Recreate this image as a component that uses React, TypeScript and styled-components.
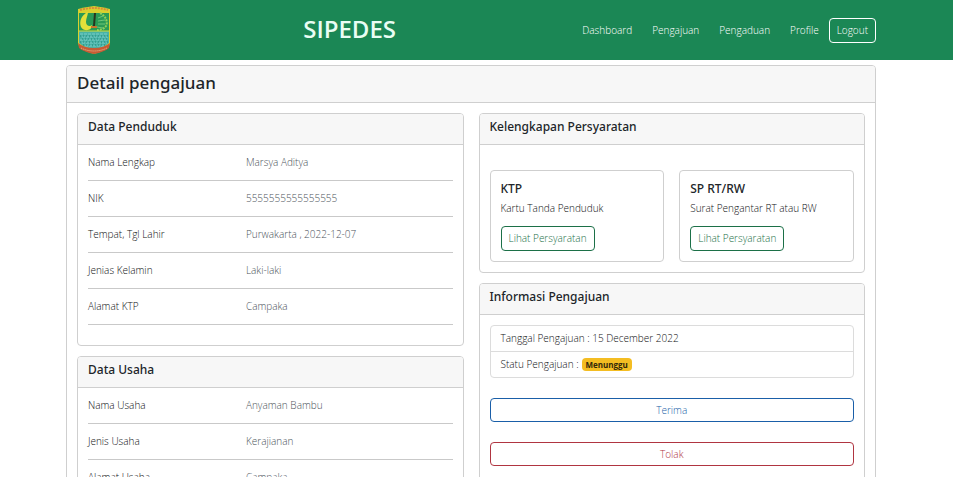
import React from "react";
import styled, { createGlobalStyle, css } from "styled-components";

const GlobalStyle = createGlobalStyle`
  *, *::before, *::after { box-sizing: border-box; }
  body {
    margin: 0;
    background: #fff;
    color: #101214;
    font-family: "Open Sans", "Noto Sans", sans-serif;
    font-size: 10px;
    font-weight: 300;
    line-height: 15px;
  }
  h1, h2, h3, p, ul, dl, dd { margin: 0; padding: 0; }
`;

const Navbar = styled.header`
  display: flex;
  align-items: center;
  justify-content: space-between;
  height: 60px;
  padding: 0 77px;
  background: #1b8755;
  color: #fff;
`;

const BrandLink = styled.a`
  display: block;
  height: 48px;
`;

const AppTitle = styled.h1`
  padding-left: 16px;
  font-size: 24px;
  font-weight: 600;
  line-height: 32px;
  padding-bottom: 2px;
  color: #e9fdf3;
`;

const Nav = styled.nav`
  display: flex;
  align-items: center;
`;

const NavLink = styled.a`
  padding: 5px 10px;
  color: #fff;
  text-decoration: none;
`;

const tones = {
  light: "#ffffff",
  green: "#1c7048",
  blue: "#1a5fa8",
  red: "#b03541",
};

const Button = styled.button<{ $tone: keyof typeof tones; $block?: boolean }>`
  height: 25px;
  padding: 0 7px;
  border: 1px solid ${(p) => tones[p.$tone]};
  border-radius: 4px;
  background: transparent;
  color: ${(p) => tones[p.$tone]};
  font: inherit;
  cursor: pointer;
  ${(p) =>
    p.$block &&
    css`
      display: block;
      width: 100%;
      height: 24px;
      margin-top: 20px;
    `}
`;

const Page = styled.main`
  padding: 5px 77px 16px 66px;
`;

const Card = styled.section`
  border: 1px solid #cfcfcf;
  border-radius: 4px;
  background: #fff;
`;

const PageHeader = styled.div`
  padding: 5px 10px 7px;
  border-bottom: 1px solid #cfcfcf;
  border-radius: 3px 3px 0 0;
  background: #f7f7f7;
`;

const PageTitle = styled.h2`
  color: #212529;
  font-family: "Noto Sans", sans-serif;
  font-size: 17px;
  font-weight: 500;
  line-height: 24px;
`;

const CardHeader = styled.div`
  padding: 5px 10px 9px;
  border-bottom: 1px solid #cfcfcf;
  border-radius: 3px 3px 0 0;
  background: #f7f7f7;
`;

const CardTitle = styled.h3`
  color: #212529;
  font-family: "Noto Sans", sans-serif;
  font-size: 12px;
  font-weight: 500;
  line-height: 16px;
`;

const CardBody = styled.div`
  padding: 10px;
`;

const Columns = styled.div`
  display: grid;
  grid-template-columns: 1fr 1fr;
  align-items: start;
  gap: 15px;
  padding: 10px;
`;

const Column = styled.div`
  display: flex;
  flex-direction: column;
  gap: 10px;
`;

const DetailList = styled.dl`
  padding-bottom: 10px;
`;

const DetailRow = styled.div`
  display: grid;
  grid-template-columns: 13fr 17fr;
  padding-bottom: 10px;
  border-bottom: 1px solid #c9c9c9;

  & + & {
    padding-top: 10px;
  }
`;

const DetailValue = styled.dd`
  color: #4c545b;
`;

const Documents = styled.div`
  display: grid;
  grid-template-columns: 1fr 1fr;
  gap: 15px;
  padding-top: 15px;
`;

const DocumentCard = styled(Card)`
  display: flex;
  flex-direction: column;
  align-items: flex-start;
  padding: 10px;
`;

const DocumentText = styled.p`
  padding: 4px 0 10px;
`;

const InfoList = styled.ul`
  border: 1px solid #dcdcdc;
  border-radius: 4px;
  list-style: none;
`;

const InfoItem = styled.li`
  display: flex;
  align-items: center;
  gap: 3px;
  padding: 5px 10px;

  & + & {
    border-top: 1px solid #dcdcdc;
  }
`;

const Actions = styled.div`
  padding-bottom: 20px;
`;

const Badge = styled.span`
  padding: 0 4px;
  border-radius: 4px;
  background: #f4bd22;
  color: #33280a;
  font-size: 8px;
  font-weight: 700;
  line-height: 13px;
`;

function Crest() {
  return (
    <svg width="34" height="48" viewBox="0 0 34 48" role="img" aria-label="Kabupaten">
      <path d="M1 3Q9 1 17 0Q25 1 33 3V38Q31 44 17 48Q3 44 1 38Z" fill="#d8d02e" />
      <path d="M3 4Q17 0 31 4" fill="none" stroke="#d98a3a" strokeWidth="2" strokeDasharray="2 1" />
      <path d="M2 7H32V25H2Z" fill="#2a9a55" />
      <path d="M11 6C4 9 2 16 4 21C7 26 15 25 15 19C13 21 9 20 9 16C9 12 11 9 11 6Z" fill="#e3e03a" />
      <path d="M23 7C29 10 31 16 29 20C27 23 23 24 20 24" fill="none" stroke="#8fd05a" strokeWidth="2" strokeDasharray="2 1" />
      <path d="M21 12L26 10M21 15L28 14M21 18L28 18M20 21L26 22" stroke="#6cc67a" strokeWidth="1" />
      <path d="M18 7L17 20" stroke="#27351e" strokeWidth="2" />
      <path d="M14 21H20" stroke="#c9752d" strokeWidth="2" />
      <path d="M2 25H32V37Q27 42 17 43Q7 42 2 37Z" fill="#48b3a6" />
      <path d="M2 25H32" stroke="#d3db35" strokeWidth="1" />
      <path d="M3 28H31M5 31H31M3 34H31M5 37H30M8 40H27" stroke="#79cbc8" strokeWidth="1" strokeDasharray="3 1" />
      <path d="M3 30H31M5 33H31M3 36H31M6 39H28" stroke="#23857c" strokeWidth="1" strokeDasharray="1 2" />
      <path d="M1 37Q7 42 17 42Q27 42 33 37L32 42Q27 46 17 48Q7 46 2 42Z" fill="#c65b35" />
      <path d="M4 42Q10 45 17 45Q24 45 30 42" fill="none" stroke="#e8c99a" strokeWidth="1" strokeDasharray="1 1" />
    </svg>
  );
}

function Details({ title, rows }: { title: string; rows: [string, string][] }) {
  return (
    <Card>
      <CardHeader>
        <CardTitle>{title}</CardTitle>
      </CardHeader>
      <CardBody>
        <DetailList>
          {rows.map(([label, value]) => (
            <DetailRow key={label}>
              <dt>{label}</dt>
              <DetailValue>{value}</DetailValue>
            </DetailRow>
          ))}
        </DetailList>
      </CardBody>
    </Card>
  );
}

const resident: [string, string][] = [
  ["Nama Lengkap", "Marsya Aditya"],
  ["NIK", "5555555555555555"],
  ["Tempat, Tgl Lahir", "Purwakarta , 2022-12-07"],
  ["Jenias Kelamin", "Laki-laki"],
  ["Alamat KTP", "Campaka"],
];

const business: [string, string][] = [
  ["Nama Usaha", "Anyaman Bambu"],
  ["Jenis Usaha", "Kerajianan"],
  ["Alamat Usaha", "Campaka"],
];

const documents = [
  { title: "KTP", text: "Kartu Tanda Penduduk" },
  { title: "SP RT/RW", text: "Surat Pengantar RT atau RW" },
];

export default function App() {
  return (
    <>
      <GlobalStyle />
      <Navbar>
        <BrandLink href="#"><Crest /></BrandLink>
        <AppTitle>SIPEDES</AppTitle>
        <Nav>
          <NavLink href="#">Dashboard</NavLink>
          <NavLink href="#">Pengajuan</NavLink>
          <NavLink href="#">Pengaduan</NavLink>
          <NavLink href="#">Profile</NavLink>
          <Button type="button" $tone="light">Logout</Button>
        </Nav>
      </Navbar>
      <Page>
        <Card>
          <PageHeader>
            <PageTitle>Detail pengajuan</PageTitle>
          </PageHeader>
          <Columns>
            <Column>
              <Details title="Data Penduduk" rows={resident} />
              <Details title="Data Usaha" rows={business} />
            </Column>
            <Column>
              <Card>
                <CardHeader>
                  <CardTitle>Kelengkapan Persyaratan</CardTitle>
                </CardHeader>
                <CardBody>
                  <Documents>
                    {documents.map((doc) => (
                      <DocumentCard key={doc.title}>
                        <CardTitle>{doc.title}</CardTitle>
                        <DocumentText>{doc.text}</DocumentText>
                        <Button type="button" $tone="green">Lihat Persyaratan</Button>
                      </DocumentCard>
                    ))}
                  </Documents>
                </CardBody>
              </Card>
              <Card>
                <CardHeader>
                  <CardTitle>Informasi Pengajuan</CardTitle>
                </CardHeader>
                <CardBody>
                  <InfoList>
                    <InfoItem>Tanggal Pengajuan : 15 December 2022</InfoItem>
                    <InfoItem>
                      Statu Pengajuan : <Badge>Menunggu</Badge>
                    </InfoItem>
                  </InfoList>
                  <Actions>
                    <Button type="button" $tone="blue" $block>Terima</Button>
                    <Button type="button" $tone="red" $block>Tolak</Button>
                  </Actions>
                </CardBody>
              </Card>
            </Column>
          </Columns>
        </Card>
      </Page>
    </>
  );
}
